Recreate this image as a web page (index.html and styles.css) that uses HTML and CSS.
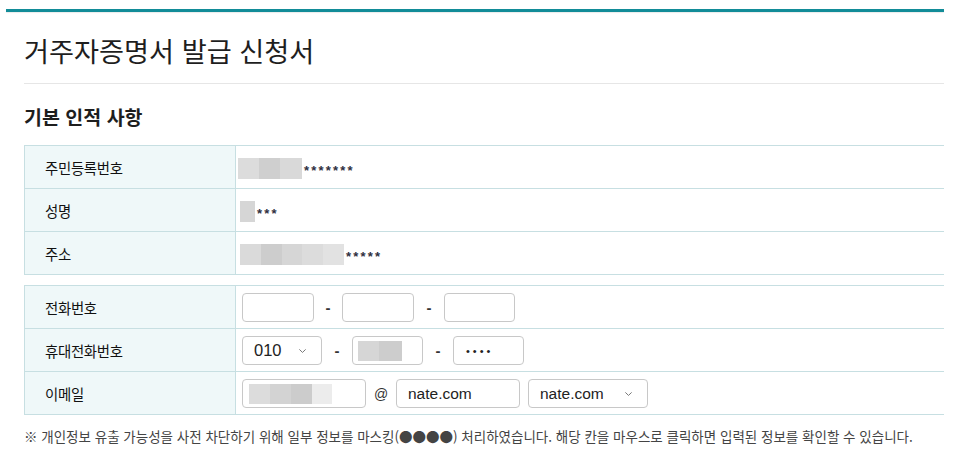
FILE: index.html
```html
<!DOCTYPE html>
<html lang="ko">
<head>
<meta charset="utf-8">
<title>거주자증명서 발급 신청서</title>
<link rel="stylesheet" href="styles.css">
</head>
<body>
<div class="topbar"></div>
<main class="page">
  <h1 class="title">거주자증명서 발급 신청서</h1>
  <h2 class="subtitle">기본 인적 사항</h2>

  <table class="info">
    <tr>
      <th>주민등록번호</th>
      <td><span class="mask"><span class="blur b1"></span><span class="stars">*******</span></span></td>
    </tr>
    <tr>
      <th>성명</th>
      <td><span class="mask"><span class="blur b2"></span><span class="stars">***</span></span></td>
    </tr>
    <tr>
      <th>주소</th>
      <td><span class="mask"><span class="blur b3"></span><span class="stars">*****</span></span></td>
    </tr>
  </table>

  <table class="info second">
    <tr>
      <th>전화번호</th>
      <td>
        <div class="fields">
          <span class="box w72"></span><span class="sep s28">-</span><span class="box w72"></span><span class="sep s30">-</span><span class="box w71"></span>
        </div>
      </td>
    </tr>
    <tr>
      <th>휴대전화번호</th>
      <td>
        <div class="fields">
          <span class="box sel w80"><span class="val big">010</span><svg class="chev" viewBox="0 0 10 6" width="9" height="6"><path d="M1.5 1.2 L5 4.6 L8.5 1.2" fill="none" stroke="#777" stroke-width="1.1"/></svg></span><span class="sep s30">-</span><span class="box w71"><span class="blur b4"></span></span><span class="sep s30">-</span><span class="box w71"><span class="dots">••••</span></span>
        </div>
      </td>
    </tr>
    <tr>
      <th>이메일</th>
      <td>
        <div class="fields">
          <span class="box w124"><span class="blur b5"></span></span><span class="sep s30 at">@</span><span class="box w124"><span class="val">nate.com</span></span><span class="box sel w120 gap8"><span class="val">nate.com</span><svg class="chev" viewBox="0 0 10 6" width="9" height="6"><path d="M1.5 1.2 L5 4.6 L8.5 1.2" fill="none" stroke="#777" stroke-width="1.1"/></svg></span>
        </div>
      </td>
    </tr>
  </table>

  <p class="note">※ 개인정보 유출 가능성을 사전 차단하기 위해 일부 정보를 마스킹(●●●●) 처리하였습니다. 해당 칸을 마우스로 클릭하면 입력된 정보를 확인할 수 있습니다.</p>
</main>
</body>
</html>
```

FILE: styles.css
```css
html, body {
  margin: 0;
  padding: 0;
  background: #ffffff;
}
body {
  font-family: "Noto Sans CJK KR", "Noto Sans", "Liberation Sans", sans-serif;
  color: #222222;
}
.topbar {
  margin: 9px 0 0 6px;
  width: 938px;
  height: 3px;
  background: #128c98;
  box-shadow: 0 1px 1px rgba(0,0,0,0.08);
}
.page {
  margin-left: 24px;
  width: 920px;
}
.title {
  margin: 19px 0 0 0;
  padding-bottom: 14px;
  font-size: 27.2px;
  line-height: 38px;
  font-weight: 400;
  color: #1e1e1e;
  border-bottom: 1px solid #e6e6e6;
}
.subtitle {
  margin: 21px 0 0 0;
  font-size: 19.5px;
  line-height: 24px;
  font-weight: 700;
  color: #1e1e1e;
}
.info {
  margin-top: 16px;
  width: 100%;
  border-collapse: collapse;
  border-top: 1px solid #c7dfe2;
}
.info.second {
  margin-top: 10px;
}
.info th {
  width: 190px;
  background: #eff8f9;
  border: 1px solid #c7dfe2;
  border-top: none;
  text-align: left;
  font-weight: 400;
  font-size: 14.4px;
  letter-spacing: -0.3px;
  color: #111111;
  padding: 0 0 0 20px;
  height: 42px;
}
.info td {
  border-bottom: 1px solid #c7dfe2;
  padding: 0 0 0 2px;
  height: 42px;
  font-size: 13px;
}
.mask {
  display: flex;
  align-items: center;
  padding-top: 3px;
}
.blur {
  display: inline-block;
  height: 21px;
}
.b1 {
  width: 64px;
  background: linear-gradient(90deg, #dcdcdc 0 21px, #cfcfcf 21px 42px, #d9d9d9 42px);
}
.b2 {
  width: 15px;
  margin-left: 2px;
  background: #d6d6d6;
}
.b3 {
  width: 104px;
  margin-left: 2px;
  background: linear-gradient(90deg, #dadada 0 21px, #cdcdcd 21px 42px, #d6d6d6 42px 62px, #dcdcdc 62px 83px, #e2e2e2 83px);
}
.stars {
  margin-left: 2px;
  font-family: "Liberation Sans", sans-serif;
  font-size: 13px;
  font-weight: 700;
  color: #2f3040;
  letter-spacing: 2.2px;
  line-height: 1;
  padding-top: 3px;
}
.fields {
  display: flex;
  align-items: center;
  padding-left: 4px;
  padding-top: 1px;
}
.box {
  box-sizing: border-box;
  height: 29px;
  border: 1px solid #c8c8c8;
  border-radius: 4px;
  background: #ffffff;
  display: inline-flex;
  align-items: center;
  font-family: "Liberation Sans", "Noto Sans", sans-serif;
  font-size: 15.5px;
  color: #222222;
}
.w72 { width: 72px; }
.w71 { width: 71px; }
.w80 { width: 80px; }
.w120 { width: 120px; }
.w124 { width: 124px; }
.gap8 { margin-left: 8px; }
.sep {
  text-align: center;
  font-family: "Liberation Sans", sans-serif;
  font-size: 15px;
  font-weight: 700;
  color: #333333;
}
.s28 { width: 28px; }
.s30 { width: 30px; }
.sep.at {
  font-weight: 400;
  font-size: 14px;
}
.val {
  padding-left: 11px;
}
.val.big {
  font-size: 16.5px;
}
.sel {
  justify-content: space-between;
}
.chev {
  margin-right: 14px;
}
.b4 {
  width: 44px;
  height: 20px;
  margin-left: 5px;
  background: linear-gradient(90deg, #d6d6d6 0 21px, #cdcdcd 21px);
}
.b5 {
  width: 83px;
  height: 20px;
  margin-left: 6px;
  background: linear-gradient(90deg, #dcdcdc 0 21px, #d3d3d3 21px 42px, #cccccc 42px 63px, #ececec 63px);
}
.dots {
  padding-left: 12px;
  font-size: 11px;
  letter-spacing: 3px;
  color: #222222;
}
.note {
  margin: 12px 0 0 0;
  font-size: 13.5px;
  line-height: 18px;
  color: #444444;
}
```
